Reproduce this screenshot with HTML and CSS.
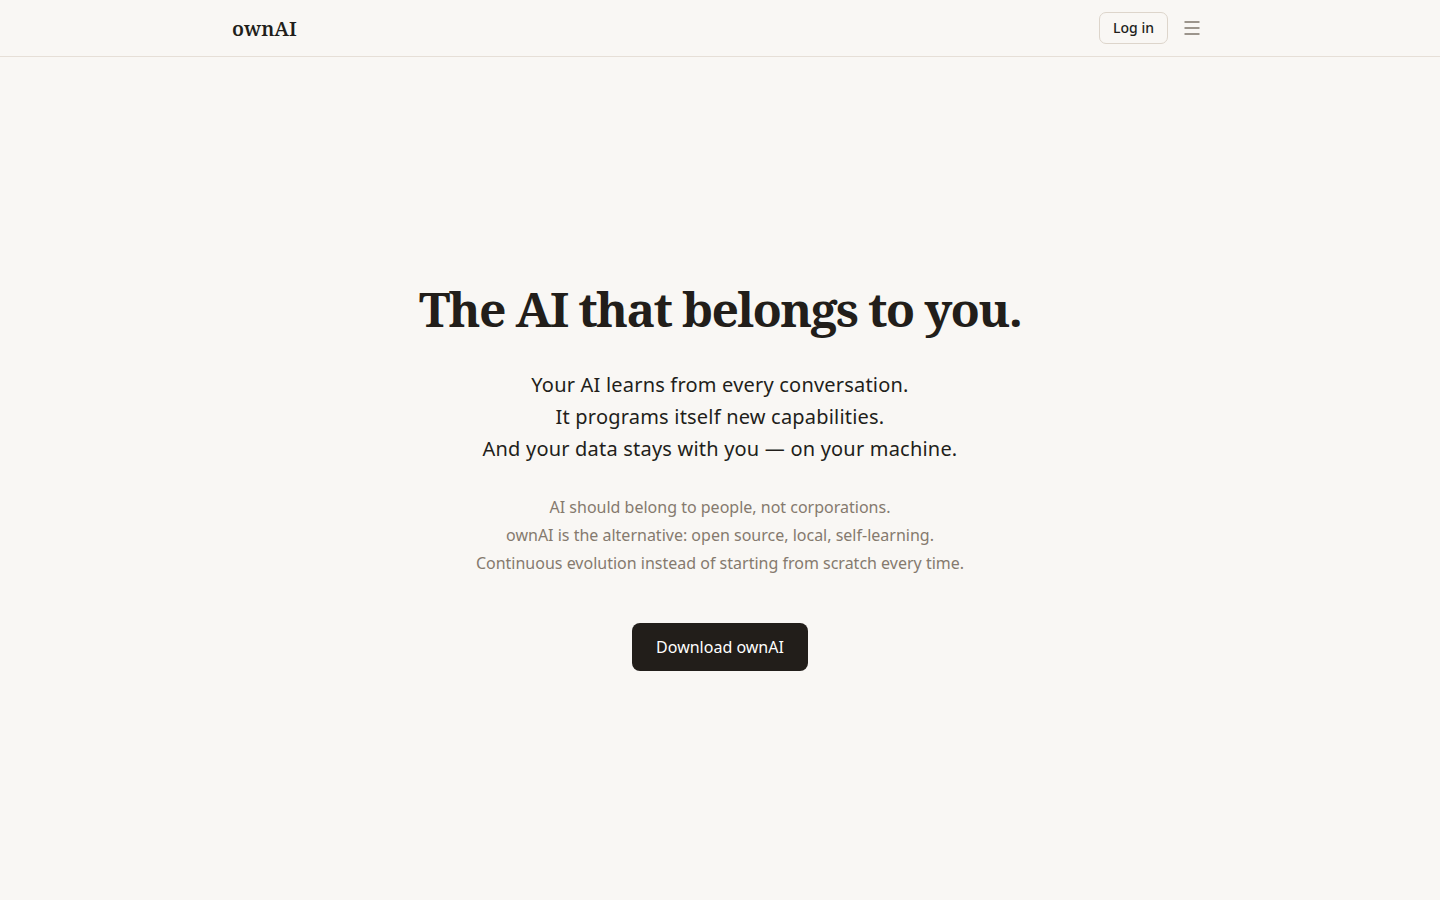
FILE: index.html
```html
<!DOCTYPE html>
<html lang="en">
<head>
  <meta charset="UTF-8">
  <title>ownAI - The AI that belongs to you</title>
  <link rel="stylesheet" href="styles.css">
</head>
<body>
  <header class="topbar">
    <div class="topbar-inner">
      <a class="logo" href="#">ownAI</a>
      <div class="topbar-actions">
        <a class="btn-login" href="#">Log in</a>
        <button class="btn-menu" aria-label="Menu">
          <svg width="16" height="14" viewBox="0 0 16 14" fill="none" stroke="currentColor" stroke-width="1.5">
            <line x1="0.5" y1="1" x2="15.5" y2="1"/>
            <line x1="0.5" y1="7" x2="15.5" y2="7"/>
            <line x1="0.5" y1="13" x2="15.5" y2="13"/>
          </svg>
        </button>
      </div>
    </div>
  </header>

  <main class="hero">
    <h1>The AI that belongs to you.</h1>
    <p class="lead">
      Your AI learns from every conversation.<br>
      It programs itself new capabilities.<br>
      And your data stays with you — on your machine.
    </p>
    <p class="mission">
      AI should belong to people, not corporations.<br>
      ownAI is the alternative: open source, local, self-learning.<br>
      Continuous evolution instead of starting from scratch every time.
    </p>
    <a class="btn-download" href="#">Download ownAI</a>
  </main>
</body>
</html>
```

FILE: styles.css
```css
body {
  font-family: 'Noto Sans', sans-serif;
  background: #f9f7f4;
  color: #221e1a;
  margin: 0;
}

a {
  text-decoration: none;
  color: inherit;
}

.topbar {
  border-bottom: 1px solid #e6dfd7;
}

.topbar-inner {
  max-width: 976px;
  margin: 0 auto;
  height: 56px;
  display: flex;
  align-items: center;
  justify-content: space-between;
}

.logo {
  font-family: 'Noto Serif', 'DejaVu Serif', serif;
  font-size: 20px;
  font-weight: 600;
  color: #221e1a;
}

.topbar-actions {
  display: flex;
  align-items: center;
  gap: 12px;
  margin-right: 4px;
}

.btn-login {
  font-size: 14px;
  font-weight: 500;
  padding: 0 13px;
  height: 30px;
  line-height: 30px;
  border: 1px solid #ddd5cb;
  border-radius: 7px;
  color: #221e1a;
}

.btn-menu {
  background: none;
  border: none;
  padding: 4px;
  color: #7d746a;
  display: flex;
  cursor: pointer;
}

.hero {
  min-height: calc(100vh - 57px);
  box-sizing: border-box;
  padding-bottom: 6px;
  display: flex;
  flex-direction: column;
  align-items: center;
  justify-content: center;
  text-align: center;
}

h1 {
  font-family: 'Noto Serif', 'DejaVu Serif', serif;
  font-size: 48px;
  font-weight: 700;
  letter-spacing: -0.035em;
  line-height: 1.2;
  margin: 0 0 32px;
  color: #221e1a;
}

.lead {
  font-size: 20px;
  letter-spacing: 0.2px;
  line-height: 32px;
  margin: 0 0 28px;
  color: #221e1a;
}

.mission {
  font-size: 16px;
  line-height: 28px;
  margin: 0 0 46px;
  color: #857a6e;
}

.btn-download {
  display: inline-block;
  background: #221e1a;
  color: #fff;
  font-size: 16px;
  height: 48px;
  line-height: 48px;
  padding: 0 24px;
  border-radius: 8px;
}
```
